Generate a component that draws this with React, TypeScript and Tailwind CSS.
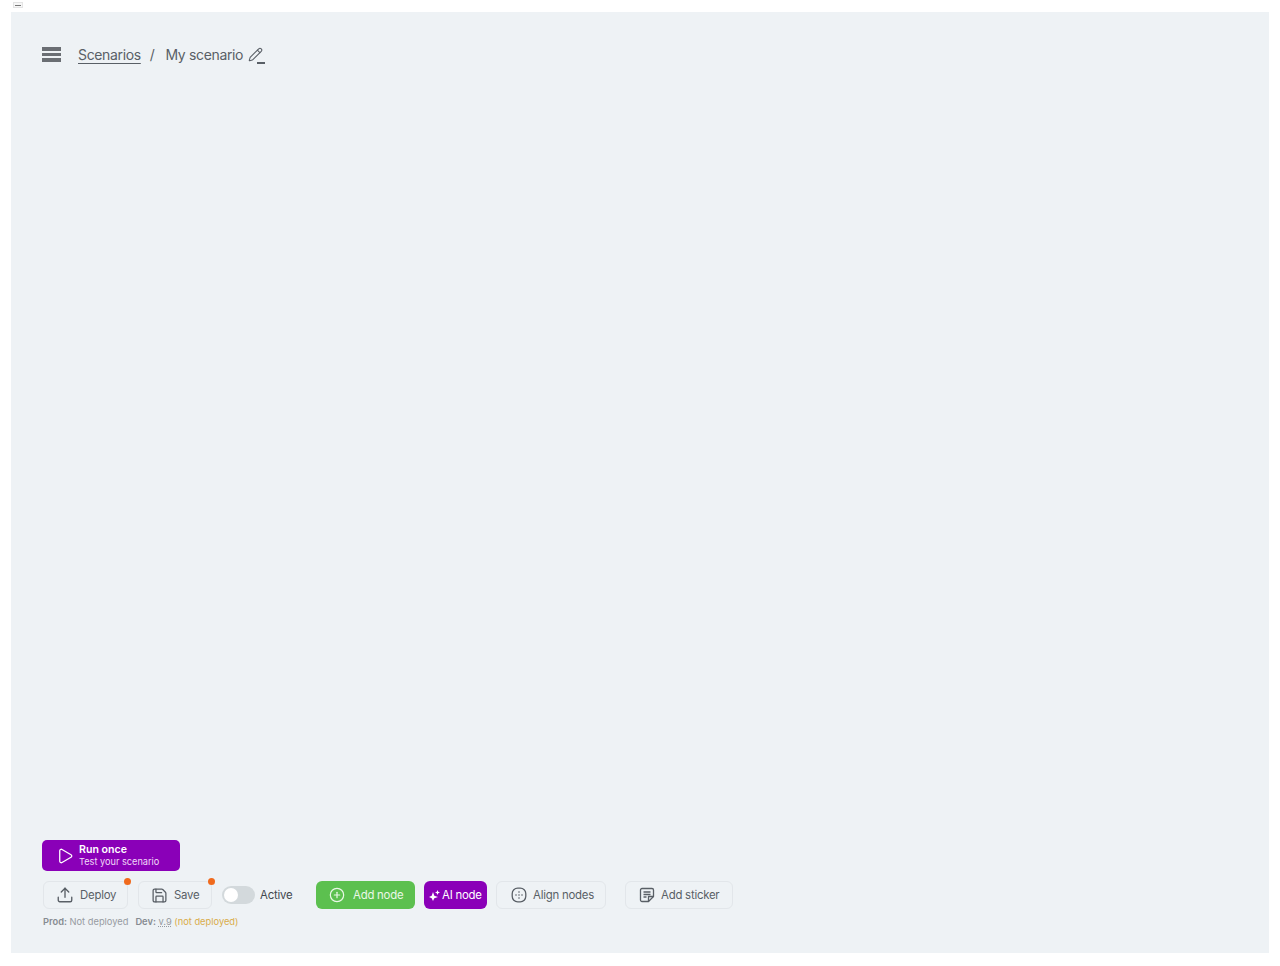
import { Upload, Save, CirclePlus, Play, Pencil } from "lucide-react";

function Dot() {
  return <span className="absolute -right-[4px] -top-[4px] h-[7px] w-[7px] rounded-full bg-[#f06a1d]" />;
}

function AlignIcon() {
  return (
    <svg width="16" height="16" viewBox="0 0 16 16" fill="none" stroke="currentColor" strokeWidth="1.3">
      <rect x="1.2" y="1.2" width="13.6" height="13.6" rx="5.5" />
      <g fill="currentColor" stroke="none">
        <circle cx="8" cy="5" r="0.8" />
        <circle cx="5" cy="8" r="0.8" />
        <circle cx="8" cy="8" r="0.8" />
        <circle cx="11" cy="8" r="0.8" />
        <circle cx="8" cy="11" r="0.8" />
      </g>
    </svg>
  );
}

function StickerIcon() {
  return (
    <svg width="16" height="16" viewBox="0 0 16 16" fill="none" stroke="currentColor" strokeWidth="1.3" strokeLinejoin="round">
      <path d="M1.5 3a1.5 1.5 0 0 1 1.5-1.5h10A1.5 1.5 0 0 1 14.5 3v6.5l-5 5H3A1.5 1.5 0 0 1 1.5 13z" />
      <path d="M14.5 9.5h-5v5" />
      <path d="M4.5 5h7M4.5 7.5h7M4.5 10h3" />
    </svg>
  );
}

function SparkIcon() {
  return (
    <svg width="11" height="11" viewBox="0 0 11 11" fill="currentColor">
      <path d="M4 2 5.3 5.7 9 7 5.3 8.3 4 11 2.7 8.3 0 7 2.7 5.7z" />
      <path d="M8.5 0 9.2 1.8 11 2.5 9.2 3.2 8.5 5 7.8 3.2 6 2.5 7.8 1.8z" />
    </svg>
  );
}

export default function App() {
  return (
    <div className="flex h-[966px] flex-col bg-white font-['Inter',sans-serif]">
      <div className="flex h-3 items-start pl-[13px] pt-[2px]">
        <div className="flex h-[6px] w-[10px] items-center justify-center border border-[#e4e4e4] bg-[#f7f7f7]">
          <div className="h-px w-[6px] bg-[#777]" />
        </div>
      </div>
      <div className="mx-[11px] flex h-[941px] flex-col justify-between bg-[#eef2f5] pb-[25px] pl-[31px] pt-[31px]">
        <div className="flex h-[22px] items-center text-[14px] tracking-[-0.025em] text-[#595f66]">
          <div className="flex w-[19px] flex-col gap-[2px]">
            <div className="h-[4px] bg-[#6a6e73]" />
            <div className="h-[3px] bg-[#6a6e73]" />
            <div className="h-[4px] bg-[#6a6e73]" />
          </div>
          <a className="ml-[17px] underline underline-offset-[3px]">Scenarios</a>
          <span className="ml-[9px]">/</span>
          <span className="ml-[11px]">My scenario</span>
          <span className="relative ml-[4px] h-[17px] w-[18px]">
            <Pencil size={15} strokeWidth={1.7} className="absolute left-[1px] top-[1px]" />
            <span className="absolute -bottom-[1px] right-0 h-[1.5px] w-[8px] bg-[#595f66]" />
          </span>
        </div>

        <div className="flex flex-col">
          <button className="flex h-[31px] w-[138px] items-center rounded-[5px] bg-[#8a00b8] pl-[14px] text-left text-white">
            <Play size={18} strokeWidth={1.7} />
            <span className="ml-[5px] flex flex-col">
              <span className="text-[10.6px] leading-[12px] font-semibold">Run once</span>
              <span className="text-[9.2px] leading-[12px] text-[#f0d9f7]">Test your scenario</span>
            </span>
          </button>

          <div className="mt-[10px] flex h-[28px] items-center text-[11.4px] tracking-[-0.02em] text-[#595f66]">
            <button className="relative ml-[1px] flex h-[28px] w-[85px] items-center rounded-md border border-[#e2e6ea] pl-[12px]">
              <Upload size={18} strokeWidth={1.8} />
              <span className="ml-[6px] pt-px">Deploy</span>
              <Dot />
            </button>
            <button className="relative ml-[10px] flex h-[28px] w-[74px] items-center rounded-md border border-[#e2e6ea] pl-[12px]">
              <Save size={17} strokeWidth={1.8} />
              <span className="ml-[6px] pt-px">Save</span>
              <Dot />
            </button>
            <div className="ml-[10px] flex h-[18px] w-[33px] items-center rounded-full bg-[#d3d9dc] pl-[2px]">
              <div className="h-[14px] w-[14px] rounded-full bg-white" />
            </div>
            <span className="ml-[5px] w-[33px] pt-px text-[#43484e]">Active</span>
            <button className="ml-[23px] flex h-[28px] w-[99px] items-center rounded-md bg-[#5cc04f] pl-[13px] text-[#eaf7e7]">
              <CirclePlus size={16} strokeWidth={1.8} />
              <span className="ml-[8px] pt-px">Add node</span>
            </button>
            <button className="ml-[9px] flex h-[28px] w-[63px] items-center rounded-md bg-[#8a00b8] pl-[5px] text-white">
              <SparkIcon />
              <span className="ml-[2px] pt-px">AI node</span>
            </button>
            <button className="ml-[9px] flex h-[28px] w-[110px] items-center rounded-md border border-[#e2e6ea] pl-[14px]">
              <AlignIcon />
              <span className="ml-[6px] pt-px">Align nodes</span>
            </button>
            <button className="ml-[19px] flex h-[28px] w-[108px] items-center rounded-md border border-[#e2e6ea] pl-[13px]">
              <StickerIcon />
              <span className="ml-[6px] pt-px">Add sticker</span>
            </button>
          </div>

          <div className="ml-[1px] mt-[7px] flex text-[9.3px] leading-[12px] text-[#969ba1]">
            <span><b className="font-semibold text-[#868b91]">Prod:</b> Not deployed</span>
            <span className="ml-[7px]">
              <b className="font-semibold text-[#868b91]">Dev:</b> <span className="underline decoration-dotted">v.9</span>{" "}
              <span className="text-[#d9ac4a]">(not deployed)</span>
            </span>
          </div>
        </div>
      </div>
    </div>
  );
}
